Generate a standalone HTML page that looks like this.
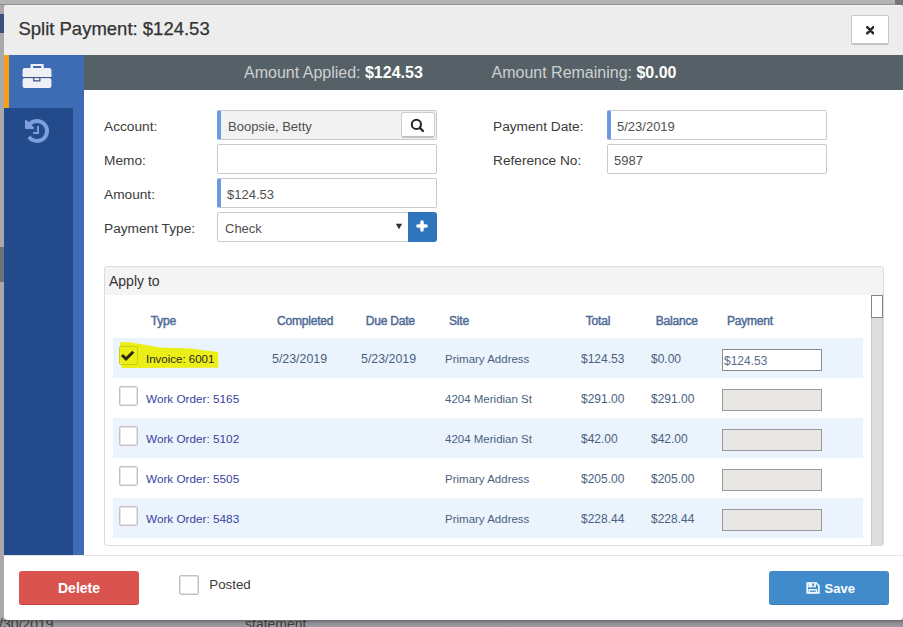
<!DOCTYPE html>
<html><head><meta charset="utf-8">
<style>
*{box-sizing:border-box;margin:0;padding:0}
html,body{width:903px;height:627px;overflow:hidden;background:#a4a4a4;font-family:"Liberation Sans",sans-serif;position:relative}
.a{position:absolute}
.t{position:absolute;white-space:nowrap;line-height:1}
</style></head><body>
<div class="a" style="left:0px;top:0px;width:903px;height:627px;background:#b3b3b3"></div>
<div class="a" style="left:0px;top:4px;width:903px;height:1px;background:#8e8e8e"></div>
<div class="a" style="left:895px;top:0px;width:8px;height:5px;background:#777"></div>
<div class="a" style="left:0px;top:5px;width:4px;height:622px;background:#aaa8aa"></div>
<div class="a" style="left:0px;top:247px;width:4px;height:35px;background:#6f7377"></div>
<div class="a" style="left:0px;top:14px;width:4px;height:19px;background:#3a5078"></div>
<div class="a" style="left:0px;top:619.5px;width:903px;height:7.5px;background:linear-gradient(#696b6f,#8d8f93 45%,#9b9da1)"></div>
<div class="t" style="left:-1px;top:617.1px;font-size:14px;color:#3a3a3a">/30/2019</div>
<div class="t" style="left:245px;top:617.1px;font-size:14px;color:#3a3a3a">statement</div>
<div class="a" style="left:4px;top:5px;width:899px;height:615px;background:#fff;border-radius:4px"></div>
<div class="a" style="left:4px;top:5px;width:899px;height:50px;background:#ededed;border-radius:3px 3px 0 0"></div>
<div class="a" style="left:6px;top:5px;width:895px;height:1px;background:#f8f8f8"></div>
<div class="t" style="left:18.4px;top:19.5px;font-size:18.5px;color:#333;-webkit-text-stroke:0.25px #333">Split Payment: $124.53</div>
<div class="a" style="left:851px;top:15px;width:38px;height:30px;background:#fff;border:1px solid #c8c8c8;border-bottom:2px solid #c4c4c4;border-radius:2px"></div>
<svg class="a" style="left:865.5px;top:26px" width="8.5" height="8.5" viewBox="0 0 8.5 8.5"><path d="M1.2 1.2L7.3 7.3M7.3 1.2L1.2 7.3" stroke="#262626" stroke-width="2.4" stroke-linecap="round"/></svg>
<div class="a" style="left:4px;top:55px;width:80px;height:53px;background:#3e6cb4"></div>
<div class="a" style="left:4px;top:55px;width:5px;height:53px;background:#f6a01a"></div>
<div class="a" style="left:4px;top:108px;width:69px;height:447px;background:#234b8c"></div>
<div class="a" style="left:73px;top:108px;width:11px;height:447px;background:#3e6cb4"></div>
<svg class="a" style="left:22px;top:63px" width="31" height="26" viewBox="0 0 31 26">
<path d="M9.5 1 h11.3 a1 1 0 0 1 1 1 v3.2 h-2.6 v-2.2 h-8.1 v2.2 h-2.6 v-3.2 a1 1 0 0 1 1-1z" fill="#eef0f6"/>
<rect x="0.6" y="5" width="28.8" height="9" rx="2" fill="#eef0f6"/>
<rect x="0.6" y="15" width="28.8" height="10" rx="2" fill="#eef0f6"/>
<rect x="0.6" y="11" width="28.8" height="4" fill="#eef0f6"/>
<rect x="0" y="14" width="30" height="1.1" fill="#3d5488"/>
<path d="M11.7 14.5 v3.3 h6.2 v-3.3" fill="none" stroke="#3d5488" stroke-width="1.2"/>
</svg>
<svg class="a" style="left:25px;top:119.3px" width="24" height="24" viewBox="0 128 1536 1536"><path fill="#7d9fe0" d="M1536 896q0 156-61 298t-164 245-245 164-298 61q-172 0-327-72.5t-264-204.5q-7-10-6.5-22.5t8.5-20.5l137-138q10-9 25-9 16 2 23 12 73 95 179 147t225 52q104 0 198.5-40.5t163.5-109.5 109.5-163.5 40.5-198.5-40.5-198.5-109.5-163.5-163.5-109.5-198.5-40.5q-98 0-188 35.5t-160 101.5l137 138q31 30 14 69-17 40-59 40h-448q-26 0-45-19t-19-45v-448q0-42 40-59 39-17 69 14l130 129q107-101 244.5-156.5t284.5-55.5q156 0 298 61t245 164 164 245 61 298zm-640-288v448q0 14-9 23t-23 9h-320q-14 0-23-9t-9-23v-64q0-14 9-23t23-9h224v-352q0-14 9-23t23-9h64q14 0 23 9t9 23z"/></svg>
<div class="a" style="left:84px;top:55px;width:819px;height:35px;background:#566167"></div>
<div class="t" style="left:244px;top:65.1px;font-size:16px;color:#cdd0d2">Amount Applied: <b style="color:#fff">$124.53</b></div>
<div class="t" style="left:491.5px;top:65.1px;font-size:16px;color:#cdd0d2">Amount Remaining: <b style="color:#fff">$0.00</b></div>
<div class="t" style="left:104px;top:120.2px;font-size:13.7px;color:#3b3b3b">Account:</div>
<div class="t" style="left:104px;top:154.4px;font-size:13.7px;color:#3b3b3b">Memo:</div>
<div class="t" style="left:104px;top:188.0px;font-size:13.7px;color:#3b3b3b">Amount:</div>
<div class="t" style="left:104px;top:221.6px;font-size:13.7px;color:#3b3b3b">Payment Type:</div>
<div class="t" style="left:493px;top:120.2px;font-size:13.7px;color:#3b3b3b">Payment Date:</div>
<div class="t" style="left:493px;top:154.4px;font-size:13.7px;color:#3b3b3b">Reference No:</div>
<div class="a" style="left:217px;top:110px;width:220px;height:30px;background:#f2f2f2;border:1px solid #c9c9c9;border-radius:2px;border-left:4px solid #6b9ae0"></div>
<div class="a" style="left:401px;top:112px;width:34px;height:26px;background:#fff;border:1px solid #cdcdcd;border-bottom:2px solid #c2c2c2;border-radius:3px"></div>
<svg class="a" style="left:410px;top:118px" width="15" height="15" viewBox="0 0 15 15"><circle cx="6.4" cy="6.4" r="4.6" fill="none" stroke="#222" stroke-width="2"/><path d="M9.7 9.7 L13 13" stroke="#222" stroke-width="2.2" stroke-linecap="round"/></svg>
<div class="t" style="left:228px;top:119.9px;font-size:13px;color:#505050">Boopsie, Betty</div>
<div class="a" style="left:217px;top:144px;width:220px;height:30px;background:#fff;border:1px solid #c9c9c9;border-radius:2px"></div>
<div class="a" style="left:217px;top:178px;width:220px;height:30px;background:#fff;border:1px solid #c9c9c9;border-radius:2px;border-left:4px solid #6b9ae0"></div>
<div class="t" style="left:227px;top:187.8px;font-size:13px;color:#505050">$124.53</div>
<div class="a" style="left:217px;top:212px;width:192px;height:30px;background:#fff;border:1px solid #c9c9c9;border-radius:2px 0 0 2px"></div>
<div class="t" style="left:225px;top:221.8px;font-size:13px;color:#505050">Check</div>
<svg class="a" style="left:395px;top:223px" width="8" height="7" viewBox="0 0 8 7"><path d="M0.8 0.8 H7.2 L4 6.2Z" fill="#333"/></svg>
<div class="a" style="left:408px;top:212px;width:29px;height:30px;background:#2f75bd;border-radius:0 3px 3px 0"></div>
<svg class="a" style="left:416px;top:219.7px" width="12" height="12" viewBox="0 0 12 12"><path d="M6 1.9 V10.1 M1.9 6 H10.1" stroke="#fff" stroke-width="3.5" stroke-linecap="round"/></svg>
<div class="a" style="left:607px;top:110px;width:220px;height:30px;background:#fff;border:1px solid #c9c9c9;border-radius:2px;border-left:4px solid #6b9ae0"></div>
<div class="t" style="left:617px;top:119.9px;font-size:13px;color:#505050">5/23/2019</div>
<div class="a" style="left:607px;top:144px;width:220px;height:30px;background:#fff;border:1px solid #c9c9c9;border-radius:2px"></div>
<div class="t" style="left:614px;top:153.9px;font-size:13px;color:#505050">5987</div>
<div class="a" style="left:104px;top:266px;width:780px;height:280px;background:#fff;border:1px solid #dcdcdc;border-radius:3px"></div>
<div class="a" style="left:105px;top:267px;width:778px;height:28px;background:#f4f4f4;border-radius:2px 2px 0 0"></div>
<div class="t" style="left:109px;top:274.3px;font-size:14px;color:#333">Apply to</div>
<div class="a" style="left:871px;top:295px;width:12px;height:250px;background:#dddddd;border-left:1px solid #cacaca;border-right:1px solid #d0d0d0"></div>
<div class="a" style="left:871px;top:295px;width:12px;height:23px;background:#fff;border:1px solid #858585"></div>
<div class="t" style="left:150.8px;top:314.8px;font-size:12px;font-weight:normal;color:#4f6a96;-webkit-text-stroke:0.45px #4f6a96;letter-spacing:-0.2px">Type</div>
<div class="t" style="left:277px;top:314.8px;font-size:12px;font-weight:normal;color:#4f6a96;-webkit-text-stroke:0.45px #4f6a96;letter-spacing:-0.2px">Completed</div>
<div class="t" style="left:365.7px;top:314.8px;font-size:12px;font-weight:normal;color:#4f6a96;-webkit-text-stroke:0.45px #4f6a96;letter-spacing:-0.2px">Due Date</div>
<div class="t" style="left:449px;top:314.8px;font-size:12px;font-weight:normal;color:#4f6a96;-webkit-text-stroke:0.45px #4f6a96;letter-spacing:-0.2px">Site</div>
<div class="t" style="left:585.8px;top:314.8px;font-size:12px;font-weight:normal;color:#4f6a96;-webkit-text-stroke:0.45px #4f6a96;letter-spacing:-0.2px">Total</div>
<div class="t" style="left:655.7px;top:314.8px;font-size:12px;font-weight:normal;color:#4f6a96;-webkit-text-stroke:0.45px #4f6a96;letter-spacing:-0.2px">Balance</div>
<div class="t" style="left:727px;top:314.8px;font-size:12px;font-weight:normal;color:#4f6a96;-webkit-text-stroke:0.45px #4f6a96;letter-spacing:-0.2px">Payment</div>
<div class="a" style="left:113px;top:338px;width:750px;height:40px;background:#ebf4fd"></div>
<svg class="a" style="left:112px;top:336px" width="110" height="36" viewBox="112 336 110 36"><path d="M120 342.3 L130 342.3 L160 347.6 L190 348.6 L218 352 L218.3 367.7 L122 368 L120 361 Z" fill="#ecee18"/></svg>
<div class="a" style="left:119px;top:346px;width:19px;height:19px;border:1.5px solid #cccc10;border-radius:2px"></div>
<svg class="a" style="left:119px;top:346px" width="19" height="19" viewBox="0 0 19 19"><path d="M3 9 L7 13 L14.3 5.8" fill="none" stroke="#2a2a12" stroke-width="3"/></svg>
<div class="t" style="left:146px;top:353.7px;font-size:11.5px;color:#2a2a20">Invoice: 6001</div>
<div class="t" style="left:272px;top:352.9px;font-size:12.4px;color:#4a5f80">5/23/2019</div>
<div class="t" style="left:361px;top:352.9px;font-size:12.4px;color:#4a5f80">5/23/2019</div>
<div class="t" style="left:445px;top:353.7px;font-size:11.5px;color:#4a5f80">Primary Address</div>
<div class="t" style="left:581px;top:353.2px;font-size:12px;color:#4a5f80">$124.53</div>
<div class="t" style="left:651px;top:353.2px;font-size:12px;color:#4a5f80">$0.00</div>
<div class="a" style="left:722px;top:349px;width:100px;height:22px;background:#fff;border:1px solid #8c8c8c"></div>
<div class="t" style="left:724px;top:355.1px;font-size:12px;color:#5a6b88">$124.53</div>
<div class="a" style="left:118.5px;top:386px;width:19.5px;height:20px;background:#fff;border:1px solid #c2c2c2;box-shadow:inset 0 0 0 1px #e4e4e4;border-radius:2px"></div>
<div class="t" style="left:146px;top:392.5px;font-size:11.75px;color:#3a3f9c">Work Order: 5165</div>
<div class="t" style="left:445px;top:393.7px;font-size:11.5px;color:#4a5f80">4204 Meridian St</div>
<div class="t" style="left:581px;top:393.2px;font-size:12px;color:#4a5f80">$291.00</div>
<div class="t" style="left:651px;top:393.2px;font-size:12px;color:#4a5f80">$291.00</div>
<div class="a" style="left:722px;top:389px;width:100px;height:22px;background:#e8e7e3;border:1px solid #9a9a9a"></div>
<div class="a" style="left:113px;top:418px;width:750px;height:40px;background:#ebf4fd"></div>
<div class="a" style="left:118.5px;top:426px;width:19.5px;height:20px;background:#fff;border:1px solid #c2c2c2;box-shadow:inset 0 0 0 1px #e4e4e4;border-radius:2px"></div>
<div class="t" style="left:146px;top:432.5px;font-size:11.75px;color:#3a3f9c">Work Order: 5102</div>
<div class="t" style="left:445px;top:433.7px;font-size:11.5px;color:#4a5f80">4204 Meridian St</div>
<div class="t" style="left:581px;top:433.2px;font-size:12px;color:#4a5f80">$42.00</div>
<div class="t" style="left:651px;top:433.2px;font-size:12px;color:#4a5f80">$42.00</div>
<div class="a" style="left:722px;top:429px;width:100px;height:22px;background:#e8e7e3;border:1px solid #9a9a9a"></div>
<div class="a" style="left:118.5px;top:466px;width:19.5px;height:20px;background:#fff;border:1px solid #c2c2c2;box-shadow:inset 0 0 0 1px #e4e4e4;border-radius:2px"></div>
<div class="t" style="left:146px;top:472.5px;font-size:11.75px;color:#3a3f9c">Work Order: 5505</div>
<div class="t" style="left:445px;top:473.7px;font-size:11.5px;color:#4a5f80">Primary Address</div>
<div class="t" style="left:581px;top:473.2px;font-size:12px;color:#4a5f80">$205.00</div>
<div class="t" style="left:651px;top:473.2px;font-size:12px;color:#4a5f80">$205.00</div>
<div class="a" style="left:722px;top:469px;width:100px;height:22px;background:#e8e7e3;border:1px solid #9a9a9a"></div>
<div class="a" style="left:113px;top:498px;width:750px;height:40px;background:#ebf4fd"></div>
<div class="a" style="left:118.5px;top:506px;width:19.5px;height:20px;background:#fff;border:1px solid #c2c2c2;box-shadow:inset 0 0 0 1px #e4e4e4;border-radius:2px"></div>
<div class="t" style="left:146px;top:512.5px;font-size:11.75px;color:#3a3f9c">Work Order: 5483</div>
<div class="t" style="left:445px;top:513.7px;font-size:11.5px;color:#4a5f80">Primary Address</div>
<div class="t" style="left:581px;top:513.2px;font-size:12px;color:#4a5f80">$228.44</div>
<div class="t" style="left:651px;top:513.2px;font-size:12px;color:#4a5f80">$228.44</div>
<div class="a" style="left:722px;top:509px;width:100px;height:22px;background:#e8e7e3;border:1px solid #9a9a9a"></div>
<div class="a" style="left:4px;top:555px;width:920px;height:1px;background:#e5e5e5"></div>
<div class="a" style="left:19px;top:571px;width:120px;height:34px;background:#d9534f;border-radius:3px;border-bottom:1px solid #c9443f"></div>
<div class="t" style="left:58px;top:581.1px;font-size:14px;font-weight:bold;color:#fff">Delete</div>
<div class="a" style="left:179px;top:575px;width:20px;height:20px;background:#fff;border:1px solid #c0c0c0;box-shadow:inset 0 0 0 1px #e2e2e2;border-radius:2px"></div>
<div class="t" style="left:209.3px;top:578.2px;font-size:13.3px;color:#3a3a3a">Posted</div>
<div class="a" style="left:769px;top:571px;width:120px;height:34px;background:#428bca;border-radius:3px;border-bottom:1px solid #3a7cb8"></div>
<svg class="a" style="left:806px;top:582px" width="14" height="12" viewBox="0 0 14 12">
<path d="M1.2 1 H10.2 L12.9 3.7 V10.8 H1.2 Z" fill="none" stroke="#eef6ff" stroke-width="1.7"/>
<rect x="2.3" y="0.5" width="7.6" height="4.8" fill="#eef6ff"/>
<rect x="6.3" y="1.4" width="1.7" height="2.9" fill="#4a86c4"/>
<rect x="3.2" y="7.8" width="7.3" height="2.8" fill="none" stroke="#eef6ff" stroke-width="1.5"/>
</svg>
<div class="t" style="left:824.5px;top:582.0px;font-size:13px;font-weight:bold;color:#fff">Save</div>
</body></html>
